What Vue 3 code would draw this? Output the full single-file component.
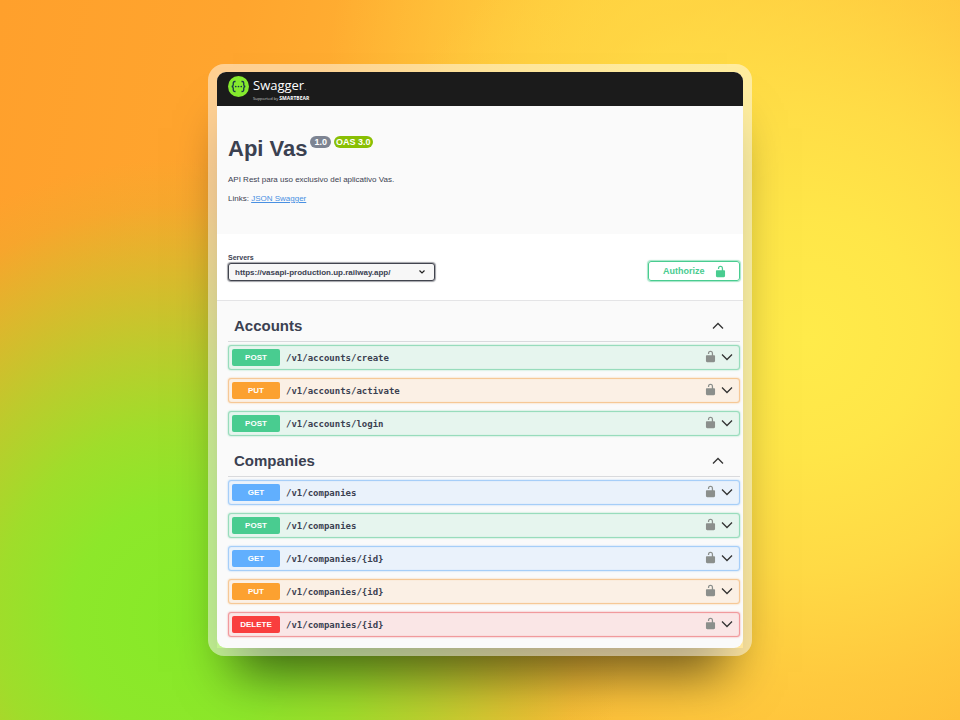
<script setup>
import { ref } from 'vue'

const server = ref('https://vasapi-production.up.railway.app/')

const unlocked =
  'M15.8 8H14V5.6C14 2.703 12.665 1 10 1 7.334 1 6 2.703 6 5.6V6h2v-.801C8 3.754 8.797 3 10 3c1.203 0 2 .754 2 2.199V8H4c-.553 0-1 .646-1 1.199V17c0 .549.428 1.139.951 1.307l1.197.387C5.672 18.861 6.55 19 7.1 19h5.8c.549 0 1.428-.139 1.951-.307l1.196-.387c.524-.167.953-.757.953-1.306V9.199C17 8.646 16.352 8 15.8 8z'

const sections = ref([
  {
    name: 'Accounts',
    open: true,
    operations: [
      { method: 'post', path: '/v1/accounts/create' },
      { method: 'put', path: '/v1/accounts/activate' },
      { method: 'post', path: '/v1/accounts/login' },
    ],
  },
  {
    name: 'Companies',
    open: true,
    operations: [
      { method: 'get', path: '/v1/companies' },
      { method: 'post', path: '/v1/companies' },
      { method: 'get', path: '/v1/companies/{id}' },
      { method: 'put', path: '/v1/companies/{id}' },
      { method: 'delete', path: '/v1/companies/{id}' },
    ],
  },
])
</script>

<template>
  <div class="stage">
    <div class="frame">
      <main class="card">
        <header class="topbar">
          <svg class="mark" viewBox="0 0 42 42" aria-hidden="true">
            <circle cx="21" cy="21" r="21" fill="#85ea2d" />
            <g fill="none" stroke="#173647" stroke-width="2.6">
              <path d="M15 11h-1.500q-3 0-3 3v3.500q0 3-3 3.500 3 .500 3 3.500v3.500q0 3 3 3H15" />
              <path d="M27 11h1.500q3 0 3 3v3.500q0 3 3 3.500-3 .500-3 3.500v3.500q0 3-3 3H27" />
            </g>
            <g fill="#173647">
              <circle cx="15.500" cy="21" r="1.700" />
              <circle cx="21" cy="21" r="1.700" />
              <circle cx="26.500" cy="21" r="1.700" />
            </g>
          </svg>
          <div class="brand">
            <span class="brand-name">Swagger<small>.</small></span>
            <span class="brand-by">Supported by <b>SMARTBEAR</b></span>
          </div>
        </header>

        <section class="info">
          <div class="title-row">
            <h1>Api Vas</h1>
            <span class="tag">1.0</span>
            <span class="tag oas">OAS 3.0</span>
          </div>
          <p>API Rest para uso exclusivo del aplicativo Vas.</p>
          <p>Links: <a href="#json">JSON Swagger</a></p>
        </section>

        <section class="scheme">
          <div class="servers">
            <label for="server">Servers</label>
            <div class="select">
              <select id="server" v-model="server">
                <option>https://vasapi-production.up.railway.app/</option>
              </select>
              <svg viewBox="0 0 8 8" aria-hidden="true">
                <path d="M1.500 2.500l2.500 2.500 2.500-2.500" fill="none" stroke="#222" stroke-width="1.200" />
              </svg>
            </div>
          </div>
          <button class="authorize" type="button">
            <span>Authorize</span>
            <svg class="lock" viewBox="0 0 20 20" aria-hidden="true">
              <path :d="unlocked" />
            </svg>
          </button>
        </section>

        <div class="sections">
          <section v-for="section in sections" :key="section.name">
            <h2>
              <button type="button" :aria-expanded="section.open" @click="section.open = !section.open">
                <span>{{ section.name }}</span>
                <svg class="chevron" :class="{ up: section.open }" viewBox="0 0 12 12" aria-hidden="true">
                  <path d="M1 3.500l5 5 5-5" />
                </svg>
              </button>
            </h2>
            <ul v-if="section.open">
              <li v-for="op in section.operations" :key="op.method + op.path" :class="op.method">
                <button class="summary" type="button">
                  <span class="method">{{ op.method.toUpperCase() }}</span>
                  <span class="path">{{ op.path }}</span>
                </button>
                <button class="icon" type="button" aria-label="Authorization">
                  <svg class="lock" viewBox="0 0 20 20" aria-hidden="true">
                    <path :d="unlocked" />
                  </svg>
                </button>
                <button class="icon" type="button" aria-label="Expand operation">
                  <svg class="chevron" viewBox="0 0 12 12" aria-hidden="true">
                    <path d="M1 3.500l5 5 5-5" />
                  </svg>
                </button>
              </li>
            </ul>
          </section>
        </div>
      </main>
    </div>
  </div>
</template>

<style>
body {
  margin: 0;
}
</style>

<style scoped>
* {
  box-sizing: border-box;
}

.stage {
  min-height: 100vh;
  display: grid;
  place-items: center;
  padding: 24px;
  font-family: "Liberation Sans", Arial, sans-serif;
  color: #3b4151;
  background:
    radial-gradient(ellipse 46% 64% at 19% 86%, #87ea28 0%, #8ae92af8 25%, #94e42ae4 42%, #a4da2cc0 58%, #bccc2c80 76%, #d4b82c30 90%, #e8b02c00 100%),
    radial-gradient(ellipse 50% 64% at 84% 47%, #ffeb4a 0%, #ffe849f0 25%, #ffe048d0 50%, #ffd44480 75%, #ffc83a00 100%),
    radial-gradient(ellipse 36% 60% at 70% 14%, #ffdc44 0%, #ffdc4400 100%),
    linear-gradient(100deg, #ffa02c 0%, #ffa52e 22%, #ffba36 50%, #ffc23a 75%, #ffba36 100%);
}

.frame {
  position: relative;
  isolation: isolate;
  width: 100%;
  max-width: 544px;
  padding: 8px 9px;
}

/* the shadow lies under the translucent border, so both are separate layers */
.frame::before,
.frame::after {
  content: "";
  position: absolute;
  z-index: -1;
}

.frame::before {
  inset: 8px 9px;
  box-shadow: 0 40px 50px -16px rgba(0, 0, 0, 0.6);
}

.frame::after {
  inset: 0;
  border-radius: 16px;
  background: rgba(255, 255, 255, 0.48);
}

.card {
  overflow: hidden;
  border-radius: 9px;
  background: #fafafa;
}

button {
  margin: 0;
  padding: 0;
  border: 0;
  background: none;
  color: inherit;
  font: inherit;
  text-align: left;
  cursor: pointer;
}

.topbar {
  display: flex;
  align-items: flex-start;
  gap: 4px;
  height: 34px;
  padding: 4px 11px 0;
  background: #1b1b1b;
  color: #fff;
}

.mark {
  width: 21px;
  height: 21px;
}

.brand {
  display: flex;
  flex-direction: column;
  font-family: "Open Sans", sans-serif;
}

.brand-name {
  font-size: 13px;
  line-height: 19px;
}

.brand-name small {
  font-size: 8px;
  color: #888;
}

.brand-by {
  font-size: 4px;
  line-height: 5px;
  color: #ccc;
}

.brand-by b {
  font-size: 5px;
  color: #fff;
}

.info {
  height: 128px;
  padding: 29px 11px 0;
}

.title-row {
  display: flex;
  align-items: flex-start;
  gap: 3px;
  margin-bottom: 12px;
}

h1 {
  margin: 0;
  font-size: 22px;
  line-height: 28px;
}

.tag {
  margin-top: 1px;
  padding: 0 4px;
  border-radius: 6px;
  background: #7d8492;
  color: #fff;
  font-size: 9px;
  font-weight: bold;
  line-height: 12px;
}

.oas {
  padding: 0 2px;
  background: #89bf04;
}

.info p {
  margin: 0 0 9px;
  font-size: 8px;
  line-height: 10px;
}

.info a {
  color: #4990e2;
}

.scheme {
  display: flex;
  align-items: flex-end;
  justify-content: space-between;
  gap: 16px;
  height: 67px;
  padding: 0 3px 19px 11px;
  border-bottom: 1px solid #e4e4e6;
  background: #fff;
}

.servers {
  flex: 0 1 207px;
}

.servers label {
  display: block;
  font-size: 7px;
  font-weight: bold;
  line-height: 10px;
}

.select {
  display: grid;
  align-items: center;
}

.select > * {
  grid-area: 1 / 1;
}

.select select {
  appearance: none;
  width: 100%;
  height: 18px;
  padding: 0 24px 0 6px;
  border: 1px solid #41444e;
  border-radius: 3px;
  box-shadow: 0 0 1px 1px #41444e80;
  background: #f7f7f7;
  color: #3b4151;
  font: bold 8px "Liberation Sans", Arial, sans-serif;
}

.select svg {
  justify-self: end;
  width: 8px;
  height: 8px;
  margin-right: 9px;
  pointer-events: none;
}

.authorize {
  display: flex;
  align-items: center;
  justify-content: space-between;
  width: 92px;
  height: 20px;
  padding: 0 12px 0 14px;
  border: 1px solid #49cc90;
  border-radius: 3px;
  box-shadow: 0 0 1px 1px #49cc9080;
  color: #49cc90;
  font-size: 9px;
  font-weight: bold;
}

.lock {
  display: block;
  width: 13px;
  height: 13px;
  fill: currentColor;
}

.sections {
  display: grid;
  gap: 9px;
  padding: 9px 3px 11px 11px;
}

h2 {
  margin: 0 0 3px;
  border-bottom: 1px solid #d9dadd;
  font-size: 15px;
}

h2 button {
  display: flex;
  align-items: center;
  justify-content: space-between;
  width: 100%;
  height: 31px;
  padding: 0 16px 0 6px;
}

.chevron {
  display: block;
  width: 12px;
  height: 12px;
  fill: none;
  stroke: #333;
  stroke-width: 1.3;
}

.chevron.up {
  transform: rotate(180deg);
}

ul {
  display: grid;
  gap: 8px;
  margin: 0;
  padding: 0;
  list-style: none;
}

li {
  --tone: #49cc90;
  --edge: #98dcbc;
  --fill: #e6f5ee;
  display: flex;
  align-items: center;
  gap: 4px;
  height: 25px;
  padding: 0 6px 0 3px;
  border: 1px solid var(--edge);
  border-radius: 3px;
  box-shadow: 0 0 2px var(--edge), inset 0 0 1px var(--edge);
  background: var(--fill);
}

.put {
  --tone: #fca130;
  --edge: #f6c896;
  --fill: #fbf0e5;
}

.get {
  --tone: #61affe;
  --edge: #a6cef8;
  --fill: #eaf2fb;
}

.delete {
  --tone: #f93e3e;
  --edge: #f19a9d;
  --fill: #fae6e6;
}

.summary {
  display: flex;
  flex: 1;
  align-items: center;
  gap: 6px;
}

.method {
  width: 48px;
  border-radius: 2px;
  background: var(--tone);
  color: #fff;
  font-size: 8px;
  font-weight: bold;
  line-height: 17px;
  text-align: center;
}

.path {
  font-family: "DejaVu Sans Mono", monospace;
  font-size: 9px;
  font-weight: bold;
}

.icon {
  padding-bottom: 2px;
  color: #8b8f8c;
}
</style>
